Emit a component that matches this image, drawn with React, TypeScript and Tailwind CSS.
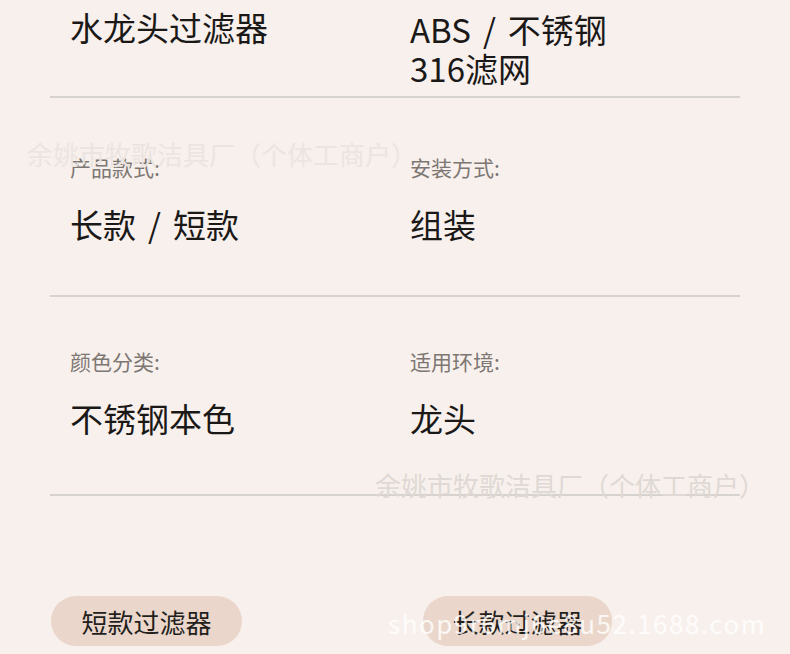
const rows = [
  {
    left: { label: "产品款式:", value: ["长款", "短款"] },
    right: { label: "安装方式:", value: ["组装"] },
    pad: "pt-[55px] pb-[51px]",
  },
  {
    left: { label: "颜色分类:", value: ["不锈钢本色"] },
    right: { label: "适用环境:", value: ["龙头"] },
    pad: "pt-[50px] pb-[56px]",
  },
];

function Slash() {
  return <span className="mx-[12px]">/</span>;
}

function Field({ label, value }: { label: string; value: string[] }) {
  return (
    <div>
      <p className="text-[21px] leading-[28px] text-[#7d7773]">{label}</p>
      <p className="mt-[23px] text-[33px] leading-[40px] text-[#1b1918]">
        {value[0]}
        {value[1] ? (
          <>
            <Slash />
            {value[1]}
          </>
        ) : null}
      </p>
    </div>
  );
}

export default function App() {
  return (
    <div
      className="relative h-[654px] w-[790px] overflow-hidden bg-[#f8f0ec]"
      style={{ fontFamily: '"Noto Sans CJK SC", "Noto Sans", sans-serif' }}
    >
      <div className="mx-[50px] flex flex-col">
        <div className="grid h-[98px] grid-cols-[340px_1fr] border-b-2 border-[#d6d2cf] pl-[20px]">
          <p className="pt-[7px] text-[33px] leading-[40px] text-[#1b1918]">水龙头过滤器</p>
          <div className="pt-[10px] text-[33px] leading-[39px] text-[#1b1918]">
            <p>
              ABS
              <Slash />
              不锈钢
            </p>
            <p>316滤网</p>
          </div>
        </div>

        {rows.map((row) => (
          <div
            key={row.left.label}
            className={`grid grid-cols-[340px_1fr] border-b-2 border-[#d6d2cf] pl-[20px] ${row.pad}`}
          >
            <Field {...row.left} />
            <Field {...row.right} />
          </div>
        ))}

        <div className="mt-[100px] flex gap-[181px] pl-px">
          <button className="flex h-[50px] w-[191px] items-center justify-center rounded-full bg-[#ead6ca] text-[26px] text-[#231f1c]">
            短款过滤器
          </button>
          <button className="flex h-[50px] w-[189px] items-center justify-center rounded-full bg-[#ead6ca] text-[26px] text-[#231f1c]">
            长款过滤器
          </button>
        </div>
      </div>

      {/* watermarks */}
      <span className="pointer-events-none absolute left-[27px] top-[137px] whitespace-nowrap text-[26px] leading-[34px] text-[#ebe5e1]">
        余姚市牧歌洁具厂（个体工商户）
      </span>
      <span className="pointer-events-none absolute left-[375px] top-[468px] whitespace-nowrap text-[26px] leading-[34px] text-[#dfd9d5]">
        余姚市牧歌洁具厂（个体工商户）
      </span>
      <span className="pointer-events-none absolute left-[388px] top-[606px] whitespace-nowrap text-[26px] leading-[34px] tracking-[1.5px] text-white/80">
        shop9r6mj6e8u52.1688.com
      </span>
    </div>
  );
}
